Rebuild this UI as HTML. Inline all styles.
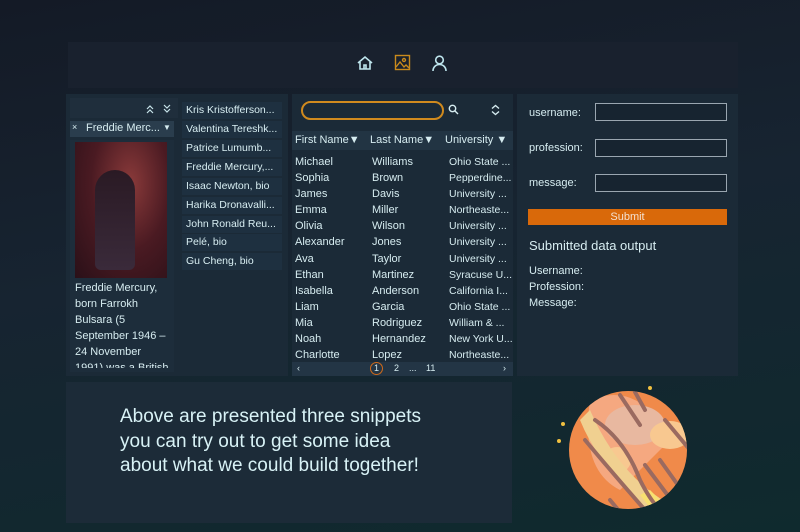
<!DOCTYPE html>
<html><head><meta charset="utf-8"><style>
*{margin:0;padding:0;box-sizing:border-box}
body{width:800px;height:532px;overflow:hidden;position:relative;font-family:"Liberation Sans",sans-serif;color:#d8eef2;
background:linear-gradient(170deg,#141a26 0%,#172431 45%,#0f2a2e 100%);}
.p{position:absolute;background:#1b2a37;}
.t{position:absolute;font-size:11px;white-space:nowrap;color:#d6ecf0}
.row{position:absolute;left:182px;width:100px;height:17px;background:#1e3040;font-size:10.5px;padding:2px 4px;white-space:nowrap;overflow:hidden;text-overflow:ellipsis}
.in{position:absolute;left:595px;width:132px;height:18px;border:1px solid #9aa6b0;background:#172430}
</style></head><body>
<div class="p" style="left:68px;top:42px;width:670px;height:46px;background:#19212e"></div>
<svg style="position:absolute;left:356px;top:54px" width="18" height="18" viewBox="0 0 18 18" fill="none" stroke="#bfe6ee" stroke-width="1.6"><path d="M2 9L9 3l7 6M4 8v7h10V8M8 15v-4h2v4"/></svg>
<svg style="position:absolute;left:394px;top:54px" width="17" height="17" viewBox="0 0 17 17" fill="none" stroke="#c98a1c" stroke-width="1.4"><rect x="1.5" y="1.5" width="14" height="14"/><circle cx="10" cy="6" r="1.5"/><path d="M2 13l4-5 4 5 2-2 3 3"/></svg>
<svg style="position:absolute;left:431px;top:54px" width="17" height="18" viewBox="0 0 17 18" fill="none" stroke="#bfe6ee" stroke-width="1.6"><circle cx="8.5" cy="6" r="3.8"/><path d="M2 17c0-4 3-6.5 6.5-6.5S15 13 15 17"/></svg>

<div class="p" style="left:66px;top:94px;width:222px;height:282px"></div>
<div class="p" style="left:70px;top:98px;width:108px;height:20px;background:#1f2e3c"></div>
<svg style="position:absolute;left:145px;top:104px" width="32" height="10" viewBox="0 0 32 10" fill="none" stroke="#c8e4ea" stroke-width="1.2"><path d="M2 5l3-3 3 3M2 9l3-3 3 3M19 1l3 3 3-3M19 5l3 3 3-3"/></svg>
<div class="p" style="left:70px;top:121px;width:104px;height:16px;background:#2a3d4d"></div>
<div class="t" style="left:72px;top:122px;font-size:9px">×</div>
<div class="t" style="left:86px;top:122px">Freddie Merc...</div>
<div class="t" style="left:163px;top:123px;font-size:8px">▼</div>
<div class="p" style="left:70px;top:140px;width:104px;height:232px;background:#1d2d3b"></div>
<div style="position:absolute;left:75px;top:142px;width:92px;height:136px;background:radial-gradient(ellipse at 60% 30%,#8a3a3a,#4a1a22 50%,#2a1018);"></div>
<div style="position:absolute;left:95px;top:170px;width:40px;height:100px;background:linear-gradient(#2a1a24,#3a2a3a);border-radius:20px 20px 6px 6px"></div>
<div class="t" style="left:75px;top:280px;line-height:16px;font-size:11px;white-space:normal;width:96px;height:88px;overflow:hidden">Freddie Mercury, born Farrokh Bulsara (5 September 1946 – 24 November 1991) was a British</div>
<div class="row" style="top:102px">Kris Kristofferson...</div>
<div class="row" style="top:121px">Valentina Tereshk...</div>
<div class="row" style="top:140px">Patrice Lumumb...</div>
<div class="row" style="top:159px">Freddie Mercury,...</div>
<div class="row" style="top:178px">Isaac Newton, bio</div>
<div class="row" style="top:197px">Harika Dronavalli...</div>
<div class="row" style="top:216px">John Ronald Reu...</div>
<div class="row" style="top:234px">Pelé, bio</div>
<div class="row" style="top:253px">Gu Cheng, bio</div>

<div class="p" style="left:292px;top:94px;width:221px;height:282px"></div>
<div style="position:absolute;left:301px;top:101px;width:143px;height:19px;border:2px solid #d08a1e;border-radius:10px"></div>
<svg style="position:absolute;left:448px;top:104px" width="11" height="11" viewBox="0 0 11 11" fill="none" stroke="#d6ecf0" stroke-width="1.4"><circle cx="4.5" cy="4.5" r="3.2"/><path d="M7 7l3 3"/></svg>
<svg style="position:absolute;left:491px;top:104px" width="9" height="12" viewBox="0 0 9 12" fill="none" stroke="#d6ecf0" stroke-width="1.4"><path d="M1 4.5l3.5-3 3.5 3M1 7.5l3.5 3 3.5-3"/></svg>
<div class="p" style="left:292px;top:131px;width:221px;height:19px;background:#223443"></div>
<div class="t" style="left:295px;top:134px">First Name▼</div>
<div class="t" style="left:370px;top:134px">Last Name▼</div>
<div class="t" style="left:445px;top:134px">University ▼</div>
<div class="t" style="left:295px;top:154px;line-height:16.1px">Michael<br>Sophia<br>James<br>Emma<br>Olivia<br>Alexander<br>Ava<br>Ethan<br>Isabella<br>Liam<br>Mia<br>Noah<br>Charlotte</div>
<div class="t" style="left:372px;top:154px;line-height:16.1px">Williams<br>Brown<br>Davis<br>Miller<br>Wilson<br>Jones<br>Taylor<br>Martinez<br>Anderson<br>Garcia<br>Rodriguez<br>Hernandez<br>Lopez</div>
<div class="t" style="left:449px;top:154px;line-height:16.1px;font-size:10.5px">Ohio State ...<br>Pepperdine...<br>University ...<br>Northeaste...<br>University ...<br>University ...<br>University ...<br>Syracuse U...<br>California I...<br>Ohio State ...<br>William &amp; ...<br>New York U...<br>Northeaste...</div>
<div class="p" style="left:292px;top:362px;width:221px;height:14px;background:#233545"></div>
<div class="t" style="left:297px;top:363px;font-size:9px">‹</div>
<div style="position:absolute;left:370px;top:362px;width:13px;height:13px;border:1.5px solid #d06a1a;border-radius:50%"></div>
<div class="t" style="left:374px;top:363px;font-size:9px">1</div>
<div class="t" style="left:394px;top:363px;font-size:9px">2</div>
<div class="t" style="left:409px;top:363px;font-size:9px">...</div>
<div class="t" style="left:426px;top:363px;font-size:9px">11</div>
<div class="t" style="left:503px;top:363px;font-size:9px">›</div>

<div class="p" style="left:517px;top:94px;width:221px;height:282px"></div>
<div class="t" style="left:529px;top:107px">username:</div>
<div class="t" style="left:529px;top:142px">profession:</div>
<div class="t" style="left:529px;top:177px">message:</div>
<div class="in" style="top:103px"></div>
<div class="in" style="top:139px"></div>
<div class="in" style="top:174px"></div>
<div style="position:absolute;left:528px;top:209px;width:199px;height:16px;background:#d9690a;color:#f4e0d0;font-size:11px;text-align:center;line-height:16px">Submit</div>
<div class="t" style="left:529px;top:238px;font-size:13px">Submitted data output</div>
<div class="t" style="left:529px;top:263px;line-height:16px">Username:<br>Profession:<br>Message:</div>

<div class="p" style="left:66px;top:382px;width:446px;height:141px;background:#1c2b38"></div>
<div class="t" style="left:120px;top:405px;font-size:19px;line-height:24.5px;color:#d8f2f6">Above are presented three snippets<br>you can try out to get some idea<br>about what we could build together!</div>

<svg style="position:absolute;left:550px;top:380px" width="150" height="140" viewBox="0 0 150 140">
<defs><clipPath id="c"><circle cx="78" cy="70" r="59"/></clipPath></defs>
<circle cx="78" cy="70" r="59" fill="#f08a4a"/>
<g clip-path="url(#c)">
<path d="M40 20 Q90 0 120 60 L70 110 Q30 90 40 20Z" fill="#f5a880"/>
<ellipse cx="85" cy="45" rx="30" ry="20" fill="#e8b8a0"/>
<ellipse cx="120" cy="55" rx="20" ry="14" fill="#f8c890"/>
<ellipse cx="67" cy="80" rx="14" ry="13" fill="#f8c890"/>
<path d="M30 40 Q50 90 110 140 L130 130 Q70 100 40 30Z" fill="#f0d090"/>
<path d="M100 110 L130 140 L110 140 L90 115Z" fill="#f8e070"/>
<g stroke="#9a6a60" stroke-width="4" fill="none" stroke-linecap="round">
<path d="M45 40 Q75 60 90 100 Q100 120 110 130"/>
<path d="M35 60 Q60 90 95 130"/>
<path d="M70 15 L90 45"/><path d="M85 12 L95 30"/>
<path d="M110 80 L135 115"/><path d="M95 85 L125 125"/><path d="M115 40 L140 70"/>
<path d="M60 120 L75 138"/>
</g></g>
<circle cx="100" cy="8" r="2" fill="#f0c040"/><circle cx="13" cy="44" r="2" fill="#f0c040"/><circle cx="9" cy="61" r="2" fill="#f0c040"/>
</svg>
</body></html>
